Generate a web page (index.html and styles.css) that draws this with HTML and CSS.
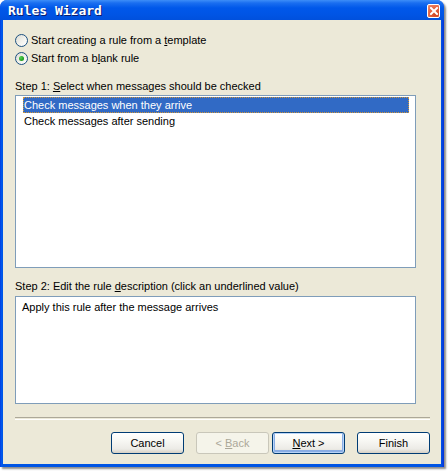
FILE: index.html
```html
<!DOCTYPE html>
<html>
<head>
<meta charset="utf-8">
<link rel="stylesheet" href="styles.css">
</head>
<body>
<div class="window">
  <div class="titlebar">
    <span class="title">Rules Wizard</span>
    <span class="close"><svg width="8" height="8" viewBox="0 0 8 8"><path d="M1 1 L7 7 M7 1 L1 7" stroke="#fff" stroke-width="2" stroke-linecap="square"/></svg></span>
  </div>
  <div class="client">
    <div class="radio-row"><span class="radio"></span><span>Start creating a rule from a <u>t</u>emplate</span></div>
    <div class="radio-row"><span class="radio checked"></span><span>Start from a b<u>l</u>ank rule</span></div>
    <div class="label first">Step 1: <u>S</u>elect when messages should be checked</div>
    <div class="listbox">
      <div class="item selected">Check messages when they arrive</div>
      <div class="item">Check messages after sending</div>
    </div>
    <div class="label second">Step 2: Edit the rule <u>d</u>escription (click an underlined value)</div>
    <div class="descbox">Apply this rule after the message arrives</div>
    <div class="separator"></div>
    <div class="buttons">
      <button class="btn cancel">Cancel</button>
      <button class="btn back" disabled>&lt; <u>B</u>ack</button>
      <button class="btn next default"><u>N</u>ext &gt;</button>
      <button class="btn finish">Finish</button>
    </div>
  </div>
</div>
</body>
</html>
```
FILE: styles.css
```css
html, body {
  margin: 0;
  padding: 0;
  background: #ffffff;
}
body {
  width: 448px;
  height: 471px;
  overflow: hidden;
  font-family: "Liberation Sans", Arial, sans-serif;
  font-size: 11px;
  color: #000;
}
.window {
  width: 444px;
  height: 467px;
  background: linear-gradient(90deg, #0831D9 0, #0058EE 1px, #0055E5 3px, #0055E5 441px, #0831D9 100%);
  border-radius: 7px 7px 0 0;
  box-shadow: 2px 2px 2px rgba(0,0,0,0.45);
  display: flex;
  flex-direction: column;
}
.titlebar {
  height: 20px;
  flex: none;
  border-radius: 7px 7px 0 0;
  background: linear-gradient(#3D8EF8 0, #1A6EF0 3px, #0058EA 8px, #0055E5 14px, #0050DC 20px);
  display: flex;
  align-items: center;
  justify-content: space-between;
  padding: 0 4px 0 8px;
}
.title {
  font-family: "DejaVu Sans Mono", monospace;
  font-weight: bold;
  font-size: 13px;
  color: #fff;
  text-shadow: 1px 1px 0 #0A1E70;
  margin-top: 1px;
}
.close {
  width: 11px;
  height: 12px;
  margin-top: 1px;
  border: 1px solid #fff;
  border-radius: 2px;
  background: radial-gradient(circle at 70% 75%, #CC4422 0, #E35F3B 45%, #F08D6F 100%);
  display: flex;
  align-items: center;
  justify-content: center;
}
.client {
  flex: 1;
  margin: 0 3px 3px 3px;
  background: #ECE9D8;
  padding: 11px 11px 0 12px;
  display: flex;
  flex-direction: column;
}
.radio-row {
  height: 18px;
  display: flex;
  align-items: center;
  gap: 3px;
}
.radio {
  width: 11px;
  height: 11px;
  border: 1px solid #1C5180;
  border-radius: 50%;
  background: linear-gradient(135deg, #DCDCD4 0, #F4F4F0 60%, #FFFFFF 100%);
  display: flex;
  align-items: center;
  justify-content: center;
  flex: none;
}
.radio.checked::after {
  content: "";
  width: 5px;
  height: 5px;
  border-radius: 50%;
  background: radial-gradient(circle at 35% 35%, #55D355 0, #21A121 60%, #1A8A1A 100%);
}
.label {
  height: 14px;
  line-height: 14px;
}
.label.first { margin-top: 12px; }
.label.second { margin-top: 11px; }
.listbox {
  margin-top: 2px;
  border: 1px solid #7F9DB9;
  background: #fff;
  padding: 1px 6px 0 7px;
  box-sizing: border-box;
  width: 401px;
  height: 173px;
}
.item {
  height: 16px;
  line-height: 16px;
  padding-left: 1px;
}
.item.selected {
  background: #316AC5;
  color: #fff;
  outline: 1px dotted #CE953A;
  outline-offset: -1px;
}
.descbox {
  margin-top: 3px;
  width: 401px;
  height: 108px;
  box-sizing: border-box;
  border: 1px solid #7F9DB9;
  background: #fff;
  padding: 3px 6px;
  line-height: 14px;
}
.separator {
  margin-top: 13px;
  width: 415px;
  height: 1px;
  border-top: 1px solid #ACA899;
  border-bottom: 1px solid #FFFFFF;
}
.buttons {
  margin-top: 12px;
  display: flex;
  justify-content: flex-end;
}
.btn {
  width: 73px;
  height: 22px;
  border: 1px solid #003C74;
  border-radius: 3px;
  background: linear-gradient(#FFFFFF 0, #F7F7F3 40%, #ECEBE6 80%, #D6D0C5 100%);
  font-family: "Liberation Sans", Arial, sans-serif;
  font-size: 11px;
  color: #000;
  padding: 0;
}
.btn.cancel { margin-right: 12px; }
.btn.back { margin-right: 3px; }
.btn.next { margin-right: 12px; }
.btn.default {
  box-shadow: inset 0 0 0 1px #B8D4F8, inset 0 -1px 0 2px #89ADE4;
}
.btn[disabled] {
  border-color: #C9C7BA;
  background: #F5F4EA;
  color: #ACA899;
}
```
